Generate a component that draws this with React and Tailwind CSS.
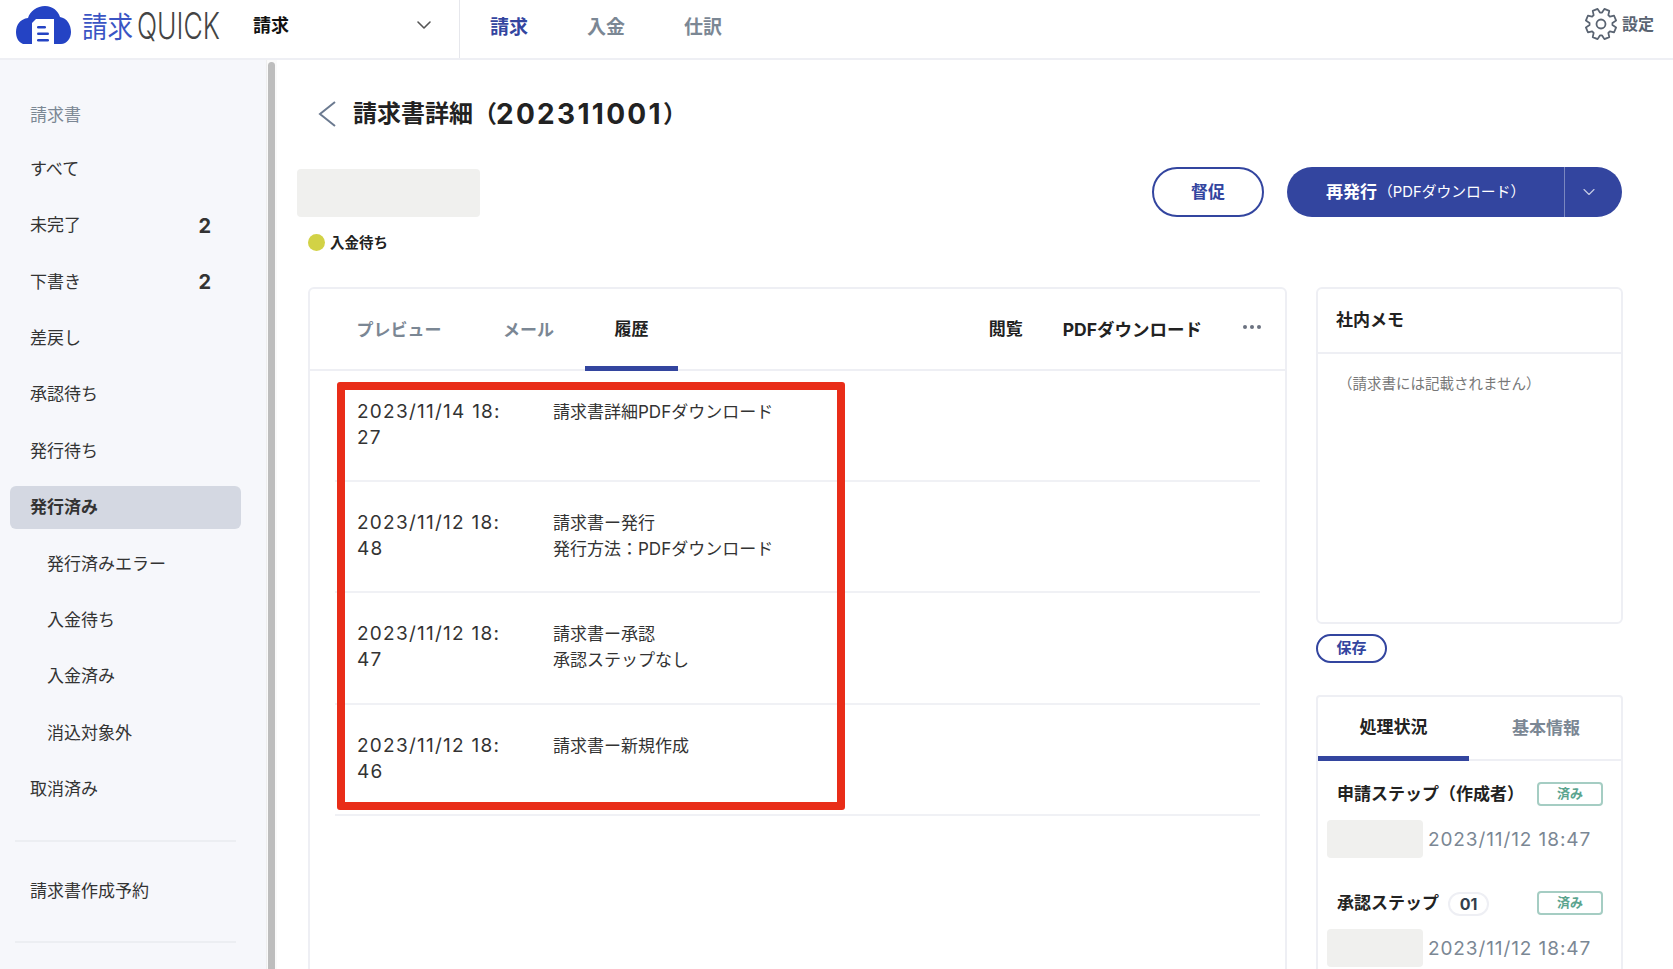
import { ChevronDown } from 'lucide-react'

const font = 'font-["Inter","Noto_Sans_CJK_JP",sans-serif]'

const menu = [
  { label: 'すべて' },
  { label: '未完了', count: 2 },
  { label: '下書き', count: 2 },
  { label: '差戻し' },
  { label: '承認待ち' },
  { label: '発行待ち' },
  { label: '発行済み', active: true },
  { label: '発行済みエラー', sub: true },
  { label: '入金待ち', sub: true },
  { label: '入金済み', sub: true },
  { label: '消込対象外', sub: true },
  { label: '取消済み' },
]

const history = [
  { date: ['2023/11/14 18:', '27'], text: ['請求書詳細PDFダウンロード'] },
  { date: ['2023/11/12 18:', '48'], text: ['請求書ー発行', '発行方法：PDFダウンロード'] },
  { date: ['2023/11/12 18:', '47'], text: ['請求書ー承認', '承認ステップなし'] },
  { date: ['2023/11/12 18:', '46'], text: ['請求書ー新規作成'] },
]

// 8-tooth outline for the settings gear
const gearPath = Array.from({ length: 8 }, (_, i) => {
  const a = (i * Math.PI) / 4 + Math.PI / 8
  const pt = (r, d) => `${(17 + r * Math.cos(a + d)).toFixed(2)} ${(17 + r * Math.sin(a + d)).toFixed(2)}`
  return `${i === 0 ? 'M' : 'L'}${pt(11.5, -0.3)} L${pt(15.5, -0.17)} L${pt(15.5, 0.17)} L${pt(11.5, 0.3)}`
}).join(' ') + ' Z'

function Logo() {
  return (
    <svg width="250" height="50" viewBox="0 0 250 50" className="shrink-0">
      <path d="M8 40 C3 38 1 33 1 28 C1 21 5 15 13 14 C15 7 22 2 30 2 C38 2 43 7 45 13 C52 14 56 21 56 28 C56 34 52 40 46 40 Z" fill="#2443c4" />
      <path d="M21 15 L39 15 L39 40 L17 40 L17 19 Z" fill="#fff" />
      <rect x="22" y="22" width="9" height="2.6" rx="1.3" fill="#2443c4" />
      <rect x="22" y="28.5" width="12" height="2.6" rx="1.3" fill="#2443c4" />
      <rect x="22" y="35" width="12" height="2.6" rx="1.3" fill="#2443c4" />
      <text x="67" y="34" fontSize="29" fill="#3a55c4" fontFamily="Noto Sans CJK JP, sans-serif" textLength="51" lengthAdjust="spacingAndGlyphs">請求</text>
      <text x="122" y="35" fontSize="37" fill="#444444" fontFamily="Inter, sans-serif" fontWeight="300" textLength="83" lengthAdjust="spacingAndGlyphs">QUICK</text>
    </svg>
  )
}

function Gear() {
  return (
    <svg width="34" height="34" viewBox="0 0 34 34" fill="none" stroke="currentColor" strokeWidth="1.8" strokeLinejoin="round">
      <path d={gearPath} />
      <circle cx="17" cy="17" r="4.5" />
    </svg>
  )
}

function Header() {
  return (
    <header className="h-[60px] shrink-0 flex items-stretch bg-white border-b-2 border-[#eeeff4]">
      <div className="w-[460px] shrink-0 flex items-center pl-[15px] border-r border-[#e6e7ec]">
        <Logo />
        <span className="-ml-[12px] -mt-[8px] text-[18px] font-bold text-[#111]">請求</span>
        <ChevronDown size={24} strokeWidth={1.6} className="ml-[123px] -mt-[8px] text-[#555]" />
      </div>
      <nav className="flex items-center pb-[2px] pl-[30px] gap-[59px] text-[19px] font-bold text-[#7b8794]">
        <span className="text-[#33459f]">請求</span>
        <span>入金</span>
        <span>仕訳</span>
      </nav>
      <div className="ml-auto flex items-center pb-[10px] pr-[19px] text-[#5a6472]">
        <Gear />
        <span className="ml-[4px] text-[16px] font-bold">設定</span>
      </div>
    </header>
  )
}

function Sidebar() {
  return (
    <aside className="w-[277px] shrink-0 flex bg-[#f6f7fb]">
      <div className="w-[266px] pt-[25px] text-[17px] text-[#333]">
        <div className="h-[56.4px] pt-[6px] flex items-center pl-[30px] text-[#7b8794]">請求書</div>
        {menu.map(m => (
          <div key={m.label} className="h-[56.4px] flex items-center">
            <div
              className={`ml-[10px] w-[231px] h-[43px] rounded-md flex items-center justify-between pr-[30px] ${m.sub ? 'pl-[37px]' : 'pl-[20px]'} ${m.active ? 'bg-[#d4d8e2] font-bold' : ''}`}
            >
              <span>{m.label}</span>
              {m.count && <span className="text-[20px] font-bold">{m.count}</span>}
            </div>
          </div>
        ))}
        <div className="ml-[15px] w-[221px] mt-[22px] border-t-2 border-[#eceef2]" />
        <div className="h-[56.4px] mt-[21px] flex items-center pl-[30px]">請求書作成予約</div>
        <div className="ml-[15px] w-[221px] mt-[22px] border-t-2 border-[#eceef2]" />
      </div>
      <div className="w-[11px] bg-[#fafafa] border-l border-[#eeeeee] pl-[1px] pt-[2px]">
        <div className="w-[7px] h-full bg-[#bdbdbd] rounded-t-sm" />
      </div>
    </aside>
  )
}

function HistoryPanel() {
  return (
    <div className="relative w-[979px] h-[700px] border-2 border-[#eeeff4] rounded-t-md">
      <div className="h-[82px] flex items-stretch border-b-2 border-[#eeeff4] pl-[18px] pr-[24px] text-[17px] font-bold">
        <div className="w-[144px] pt-[4px] flex items-center justify-center pr-[2px] text-[#7b8794]">プレビュー</div>
        <div className="w-[113px] pt-[4px] flex items-center justify-center text-[#7b8794]">メール</div>
        <div className="w-[93px] pt-[4px] -mb-[2px] flex items-center justify-center border-b-[5px] border-[#33459f] text-[#222]">履歴</div>
        <div className="ml-auto pt-[2px] flex items-center text-[#222]">
          <span>閲覧</span>
          <span className="ml-[40px] text-[17.5px]">PDFダウンロード</span>
          <span className="ml-[41px] -mt-[6px] flex gap-[3px]">
            <i className="w-[4px] h-[4px] rounded-full bg-[#6b7280]" />
            <i className="w-[4px] h-[4px] rounded-full bg-[#6b7280]" />
            <i className="w-[4px] h-[4px] rounded-full bg-[#6b7280]" />
          </span>
        </div>
      </div>
      <div className="mx-[25px] text-[17px] leading-[26px] text-[#333]">
        {history.map((h, i) => (
          <div key={i} className="h-[111.2px] pt-[28px] flex border-b-2 border-[#f0f1f5] pl-[22px]">
            <div className="w-[196px] shrink-0 text-[19px] tracking-[1.25px]">
              {h.date.map(d => <div key={d}>{d}</div>)}
            </div>
            <div>
              {h.text.map(t => <div key={t}>{t}</div>)}
            </div>
          </div>
        ))}
      </div>
      {/* 赤枠の注釈 */}
      <div className="absolute left-[27px] top-[93px] w-[508px] h-[428px] border-[8px] border-[#e92d18] rounded-[3px]" />
    </div>
  )
}

function Done() {
  return (
    <span className="ml-auto w-[66px] h-[24px] flex items-center justify-center border-2 border-[#a5cdc3] rounded-[4px] text-[13px] font-bold text-[#5aa48e]">済み</span>
  )
}

function Step({ children, date }) {
  return (
    <div className="h-[109px]">
      <div className="flex items-center h-[24px] pl-[10px] text-[17px] font-bold text-[#222]">
        <div className="flex items-center pt-[2px]">{children}</div>
        <Done />
      </div>
      <div className="mt-[14px] flex items-center">
        <div className="w-[96px] h-[38px] rounded bg-[#f0f0ee]" />
        <span className="ml-[5px] pt-[2px] text-[19px] text-[#7b8794] tracking-[0.9px]">{date}</span>
      </div>
    </div>
  )
}

function SidePanel() {
  return (
    <div className="w-[307px] shrink-0">
      <div className="h-[337px] border-2 border-[#eeeff4] rounded-md">
        <div className="h-[65px] flex items-center pl-[18px] border-b-2 border-[#eeeff4] text-[17px] font-bold text-[#222]">社内メモ</div>
        <div className="pt-[19px] pl-[20px] text-[14.5px] text-[#777]">（請求書には記載されません）</div>
      </div>
      <div className="mt-[10px] w-[71px] h-[29px] flex items-center justify-center border-2 border-[#33459f] rounded-full text-[15px] font-bold text-[#33459f]">保存</div>
      <div className="mt-[32px] h-[400px] border-2 border-[#eeeff4] rounded-t-sm">
        <div className="h-[64px] flex items-stretch border-b-2 border-[#eeeff4] text-[17px] font-bold">
          <div className="w-[151px] pt-[2px] -mb-[2px] flex items-center justify-center border-b-[5px] border-[#33459f] text-[#222]">処理状況</div>
          <div className="flex-1 pt-[1px] pl-[2px] flex items-center justify-center text-[#7b8794]">基本情報</div>
        </div>
        <div className="pt-[21px] pl-[9px] pr-[18px]">
          <Step date="2023/11/12 18:47">申請ステップ（作成者）</Step>
          <Step date="2023/11/12 18:47">
            承認ステップ
            <span className="ml-[9px] w-[41px] h-[24px] flex items-center justify-center border-2 border-[#eeeff4] rounded-full text-[16px] text-[#333f4d]">01</span>
          </Step>
        </div>
      </div>
    </div>
  )
}

export default function App() {
  return (
    <div className={`h-screen flex flex-col overflow-hidden bg-white ${font}`}>
      <Header />
      <div className="flex flex-1 min-h-0">
        <Sidebar />
        <main className="flex-1 min-w-0 pl-[31px] pt-[29px] overflow-hidden">
          <div className="h-[48px] flex items-center">
            <svg width="20" height="26" viewBox="0 0 20 26" fill="none" stroke="#6b7a90" strokeWidth="2" className="ml-[9px] mt-[1px]">
              <path d="M18 1 L3 13 L18 25" />
            </svg>
            <h1 className="ml-[16px] mt-[1px] text-[24px] font-bold text-[#222] flex items-center">
              請求書詳細（<span className="text-[28px] tracking-[2.3px] -ml-[1px]">202311001</span>）
            </h1>
          </div>
          <div className="mt-[30px] flex items-start">
            <div className="-ml-[11px]">
              <div className="mt-[2px] w-[183px] h-[48px] rounded bg-[#f0f0ee]" />
              <div className="mt-[17px] ml-[11px] h-[17px] flex items-center text-[14.5px] font-bold text-[#222]">
                <span className="w-[17px] h-[17px] rounded-full bg-[#d2d246]" />
                <span className="ml-[5px]">入金待ち</span>
              </div>
            </div>
            <div className="ml-auto mr-[51px] flex">
              <button className="w-[112px] h-[50px] pt-[1px] border-2 border-[#33459f] rounded-full text-[17px] font-bold text-[#33459f]">督促</button>
              <div className="ml-[23px] w-[335px] h-[50px] flex items-center bg-[#33459f] rounded-full text-white">
                <div className="w-[278px] pl-[39px] pt-[1px] h-full flex items-center border-r border-[#7a87c0] text-[14.8px] whitespace-nowrap">
                  <span className="text-[17px] font-bold">再発行</span>
                  <span className="ml-[1px]">（PDFダウンロード）</span>
                </div>
                <ChevronDown size={20} strokeWidth={1.4} className="ml-[14px] text-[#c5cbe4]" />
              </div>
            </div>
          </div>
          <div className="mt-[36px] flex gap-[29px]">
            <HistoryPanel />
            <SidePanel />
          </div>
        </main>
      </div>
    </div>
  )
}
